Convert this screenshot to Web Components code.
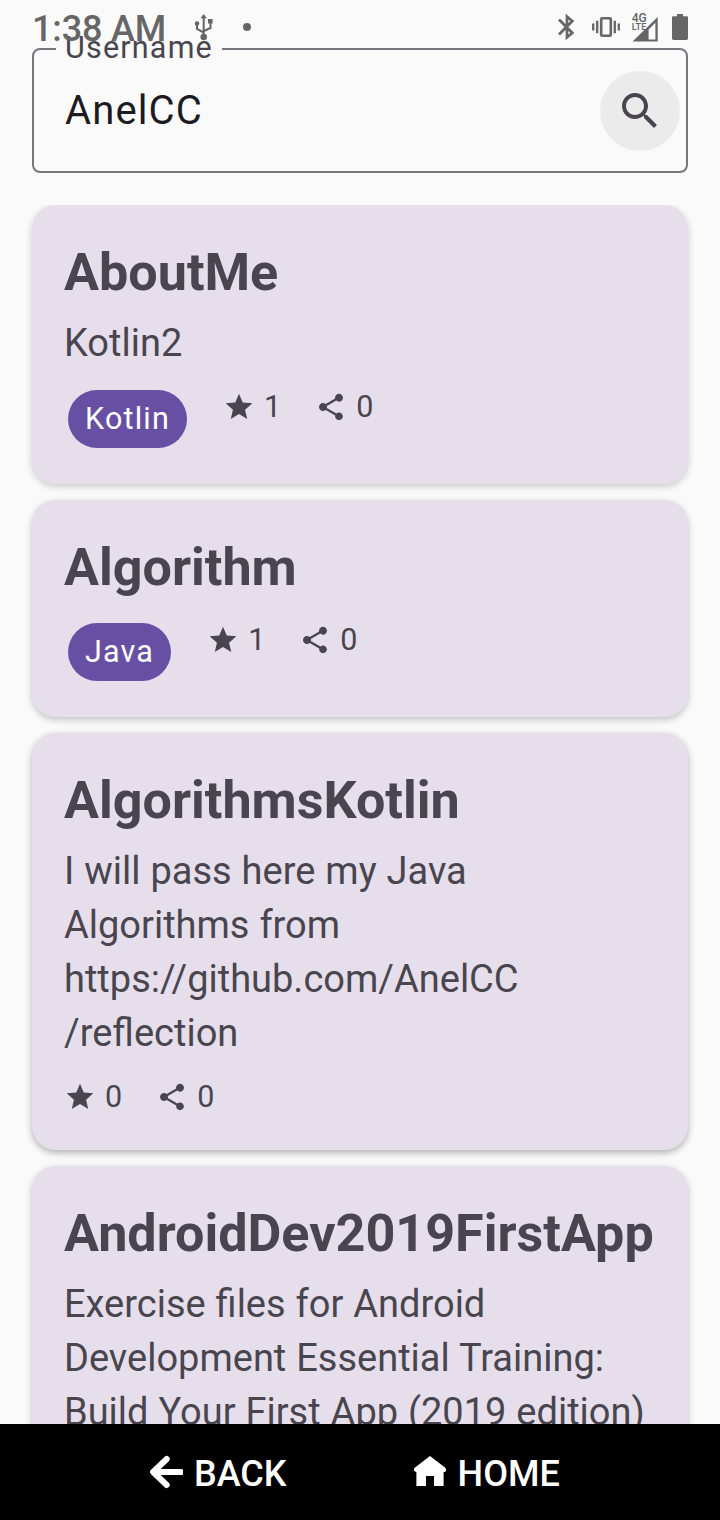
<!DOCTYPE html>
<html lang="en"><head><meta charset="utf-8"><title>Repositories</title>
<style>
html,body{margin:0;padding:0}
body{width:720px;height:1520px;overflow:hidden;background:#fafafa;font-family:Roboto,"Liberation Sans",sans-serif}
</style></head><body>
<app-screen></app-screen>
<script>
const define=(name,html,setup)=>customElements.define(name,class extends HTMLElement{
  constructor(){super();const t=document.createElement('template');t.innerHTML=html;
    this.attachShadow({mode:'open'}).append(t.content.cloneNode(true));}
  connectedCallback(){if(setup)setup(this,this.shadowRoot);}
});

define('status-bar',`<style>
:host{position:absolute;left:0;top:0;width:720px;height:48px;z-index:2;display:flex;align-items:center;box-sizing:border-box;padding:8px 31px 0 32px;color:#666;pointer-events:none}
.time{font:500 36px/40px Roboto,sans-serif;width:158px;white-space:nowrap;padding-top:2px;letter-spacing:-.15px}
svg{display:block;flex:none}
.right{margin-left:auto;display:flex;margin-top:-8px}
</style>
<span class="time">1:38 AM</span>
<svg width="70" height="40" viewBox="190 8 70 40" fill="none" stroke="#666" stroke-width="2"><path d="M203.7 17V36M197 24V29L203.7 32.5M210.5 22V28L203.7 31"/><g fill="#666" stroke="none"><path d="M203.7 14l3.2 4.2h-6.4z"/><circle cx="197" cy="23.5" r="2.2"/><path d="M208 19h4.6v4.5H208z"/><circle cx="203.7" cy="37" r="3.3"/><circle cx="247" cy="27" r="4"/></g></svg>
<svg class="right" width="134" height="48" viewBox="555 0 134 48" fill="none" stroke="#666" stroke-width="2.7"><path d="M559 19.5L572.3 33L567 37.3V16.7L572.3 21L559 34.5"/>
<rect x="601.2" y="18.2" width="9.6" height="17.6" rx="1" stroke-width="2.6"/><path d="M597.2 20.7V33.3M614.8 20.7V33.3M593.2 23.5V30.5M618.8 23.5V30.5" stroke-width="2.3"/>
<g fill="#666" stroke="none"><path fill-rule="evenodd" d="M632.5 41.6L657.7 17V41.6ZM648.6 29.4V39.4H655.4V22.7Z"/><path d="M677 14h6v2.2h3.6q1.4 0 1.4 1.4v21q0 1.4-1.4 1.4h-13.2q-1.4 0-1.4-1.4v-21q0-1.4 1.4-1.4H677z"/>
<path d="M631 23h14.5v2.5L641.5 30H631z" fill="#fafafa"/>
<text x="631.8" y="21.8" font-family="Roboto" font-weight="500" font-size="13.6" textLength="15" lengthAdjust="spacingAndGlyphs">4G</text><text x="631.8" y="30" font-family="Roboto" font-weight="500" font-size="9.5" textLength="14.5" lengthAdjust="spacingAndGlyphs">LTE</text></g></svg>`);

define('user-field',`<style>
:host{display:block;padding:48px 32px 0}
fieldset{margin:0;box-sizing:border-box;width:656px;height:125px;border:2px solid #79747e;border-radius:8px;position:relative;padding:0 6px 0 31px;display:flex;align-items:center;justify-content:space-between}
.label{position:absolute;left:22px;top:-20px;width:157px;padding-left:9px;height:36px;color:#49454f;font-size:30.5px;line-height:36px;letter-spacing:1.2px;white-space:nowrap}
.label::before{content:"";position:absolute;left:0;top:17px;width:166px;height:4px;background:#fafafa}
.label span{position:relative}
.value{color:#1c1b1f;font-size:40px;line-height:48px;letter-spacing:1.1px}
.btn{width:80px;height:80px;border-radius:50%;background:#ebebeb;display:flex;align-items:center;justify-content:center}
</style>
<fieldset><div class="label"><span>Username</span></div><span class="value">AnelCC</span>
<div class="btn"><svg width="48" height="48" viewBox="0 0 24 24" fill="#49454f"><path d="M15.5 14h-.79l-.28-.27C15.41 12.59 16 11.11 16 9.5 16 5.91 13.09 3 9.5 3S3 5.91 3 9.5 5.91 16 9.5 16c1.61 0 3.09-.59 4.23-1.57l.27.28v.79l5 4.99L20.49 19l-4.99-5zm-6 0C7.01 14 5 11.99 5 9.5S7.01 5 9.5 5 14 7.01 14 9.5 11.99 14 9.5 14z"/></svg></div></fieldset>`);

define('repo-stat',`<style>
:host{display:flex;align-items:center;gap:9px;height:42px;padding-right:1px;font-size:30.5px;letter-spacing:1px;line-height:42px}
svg{display:block}
</style><svg width="32" height="32" viewBox="0 0 24 24" fill="#49454f"><path/></svg><slot></slot>`,(h,r)=>{
 r.querySelector('path').setAttribute('d',h.getAttribute('kind')==='star'
 ?'M12 17.27L18.18 21l-1.64-7.03L22 9.24l-7.19-.61L12 2 9.19 8.63 2 9.24l5.46 4.73L5.82 21z'
 :'M18 16.08c-.76 0-1.44.3-1.96.77L8.91 12.7c.05-.23.09-.46.09-.7s-.04-.47-.09-.7l7.05-4.11c.54.5 1.25.81 2.04.81 1.66 0 3-1.34 3-3s-1.34-3-3-3-3 1.34-3 3c0 .24.04.47.09.7L8.04 9.81C7.5 9.31 6.79 9 6 9c-1.66 0-3 1.34-3 3s1.34 3 3 3c.79 0 1.5-.31 2.04-.81l7.12 4.16c-.05.21-.08.43-.08.65 0 1.61 1.31 2.92 2.92 2.92s2.92-1.31 2.92-2.92-1.31-2.92-2.92-2.92z');});

define('language-chip',`<style>
:host{display:block;margin:4px 4px 4px 4px;height:58px;padding:0 17px;border-radius:29px;background:#6750a4;color:#fff;font-size:30.5px;line-height:57px;letter-spacing:1.2px}
</style><slot></slot>`);

define('repo-card',`<style>
:host{display:block;box-sizing:border-box;padding:32px;border-radius:24px;background:#e6dfeb;color:#49454f;box-shadow:0 3px 7px rgba(0,0,0,var(--shade,.2)),0 1px 10px rgba(0,0,0,.05)}
h2{margin:0;font-size:52.1px;line-height:72px;font-weight:700;height:79px;white-space:nowrap}
.desc{font-size:38px;line-height:54px;word-spacing:.5px}
::slotted(p){margin:0 0 16px;white-space:nowrap}
.row{display:flex;align-items:flex-start;gap:32px;margin-top:8px}
</style><h2></h2><div class="desc"><slot></slot></div><div class="row"><slot name="meta"></slot></div>`,(h,r)=>{r.querySelector('h2').textContent=h.getAttribute('name');});

define('repo-list',`<style>
:host{display:flex;flex-direction:column;gap:16px;flex:1;min-height:0;margin-top:32px;padding:0 32px;overflow:hidden}
::slotted(*){flex:none}
</style><slot></slot>`);

define('nav-button',`<style>
:host{display:flex;align-items:center;gap:11px;color:#fff;font:500 36px/48px Roboto,sans-serif}
svg{display:block;margin-top:-5px}
</style><svg width="34" height="36" viewBox="0 0 34 36"></svg><slot></slot>`,(h,r)=>{
 r.querySelector('svg').innerHTML=h.getAttribute('kind')==='back'?'<path d="M17.7 5L4.1 18L17.7 31M4.5 18H32" fill="none" stroke="#fff" stroke-width="6" stroke-linecap="round" stroke-linejoin="round"/>'
 :'<path d="M17 2L32.6 14Q34 17.5 31.5 18H30.6V32H21V22H13V32H3.4V18Q0 17.5 1.4 14Z" fill="#fff"/>';});

define('bottom-nav',`<style>
:host{display:flex;flex:none;height:96px;background:#000;box-sizing:border-box;padding:4px 0 0 149px;gap:126px;align-items:center}
</style><slot></slot>`);

define('app-screen',`<style>
:host{display:flex;flex-direction:column;width:720px;height:1520px;position:relative;background:#fafafa;overflow:hidden}
</style>
<status-bar></status-bar>
<user-field></user-field>
<repo-list>
<repo-card name="AboutMe" style="--shade:.15"><p>Kotlin2</p><language-chip slot="meta">Kotlin</language-chip><repo-stat slot="meta" kind="star">1</repo-stat><repo-stat slot="meta" kind="fork">0</repo-stat></repo-card>
<repo-card name="Algorithm" style="--shade:.19"><language-chip slot="meta">Java</language-chip><repo-stat slot="meta" kind="star">1</repo-stat><repo-stat slot="meta" kind="fork">0</repo-stat></repo-card>
<repo-card name="AlgorithmsKotlin" style="--shade:.26"><p>I will pass here my Java<br>Algorithms from<br>https://github.com/AnelCC<br>/reflection</p><repo-stat slot="meta" kind="star">0</repo-stat><repo-stat slot="meta" kind="fork">0</repo-stat></repo-card>
<repo-card name="AndroidDev2019FirstApp"><p>Exercise files for Android<br>Development Essential Training:<br>Build Your First App (2019 edition)</p></repo-card>
</repo-list>
<bottom-nav><nav-button kind="back">BACK</nav-button><nav-button kind="home">HOME</nav-button></bottom-nav>`);
</script></body></html>
